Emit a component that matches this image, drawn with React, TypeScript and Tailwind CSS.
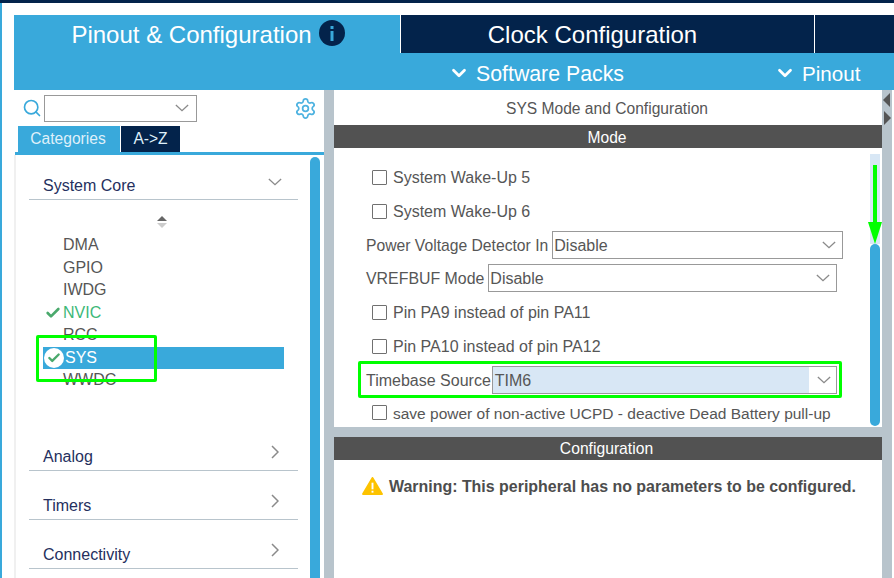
import { Check, ChevronDown, Search, Settings } from 'lucide-react'

const NAVY = 'bg-[#03234b]'

const categories = ['Analog', 'Timers', 'Connectivity']

const peripherals = ['DMA', 'GPIO', 'IWDG', 'NVIC', 'RCC', 'SYS', 'WWDC']

function Caret({ className = '' }: { className?: string }) {
  return (
    <svg viewBox="0 0 16 9" className={'w-[14px] h-[8px] ' + className} fill="none" stroke="#8a8a8a" strokeWidth="1.5">
      <path d="M1 1l7 6.5L15 1" />
    </svg>
  )
}

function CheckRow({ label, h = 'h-[34px]', size = '' }: { label: string; h?: string; size?: string }) {
  return (
    <div className={'flex items-center pl-[38px] ' + h}>
      <span className="w-[15px] h-[15px] border-[1.5px] border-[#707070] rounded-[1px] shrink-0" />
      <span className={'ml-[6px] pt-[2px] whitespace-nowrap ' + size}>{label}</span>
    </div>
  )
}

function SelectRow({ label, value, width, h, size = '' }: { label: string; value: string; width: string; h: string; size?: string }) {
  return (
    <div className={'flex items-center pl-[32px] ' + h}>
      <span className={'whitespace-nowrap mr-[4px] pt-[2px] ' + size}>{label}</span>
      <div className={'h-[28px] border border-[#999] flex items-center justify-between pl-[1px] pr-[6px] ' + width}>
        <span className="pt-[2px]">{value}</span>
        <Caret />
      </div>
    </div>
  )
}

function Category({ label, open }: { label: string; open?: boolean }) {
  return (
    <div className={'h-[49px] flex items-end justify-between border-b border-[#b8c4cc] pl-[14px] text-[#25305e] pb-[1px] ' + (open ? 'pr-[16px]' : 'pr-[19px]')}>
      <span>{label}</span>
      {open ? (
        <Caret className="mb-[12px]" />
      ) : (
        <svg viewBox="0 0 8 14" className="w-[8px] h-[14px] mb-[10px]" fill="none" stroke="#8a8a8a" strokeWidth="1.5">
          <path d="M1 1l6 6-6 6" />
        </svg>
      )}
    </div>
  )
}

export default function App() {
  return (
    <div className="relative w-[894px] h-[578px] bg-white overflow-hidden text-[16px] text-[#565656] font-['Liberation_Sans',Arial,sans-serif]">
      <div className={'h-[3px] ' + NAVY} />
      <div className="flex h-[575px]">
        <div className="w-[2px] bg-[#39a9db]" />
        <div className="w-[12px]" />
        <div className="w-[880px] pt-[12px]">
          {/* top tabs */}
          <div className="flex h-[38px] text-white text-[24px]">
            <div className="w-[386px] bg-[#39a9db] flex items-center justify-center pl-[2px] gap-[7px]">
              <span className="pt-[2px]">Pinout &amp; Configuration</span>
              <svg viewBox="0 0 26 26" className="w-[26px] h-[26px] -mt-[2px]">
                <circle cx="13" cy="13" r="13" fill="#03234b" />
                <rect x="11.5" y="11" width="3" height="10" fill="#39a9db" />
                <rect x="11.5" y="6" width="3" height="3" fill="#39a9db" />
              </svg>
            </div>
            <div className={'w-[414px] ml-[1px] flex items-center justify-center pr-[30px] border-r border-white ' + NAVY}>
              <span className="pt-[2px]">Clock Configuration</span>
            </div>
            <div className={'flex-1 ' + NAVY} />
          </div>
          {/* sub menu */}
          <div className="h-[37px] bg-[#39a9db] flex items-center text-white text-[21.3px] pl-[434px] pt-[7px]">
            <ChevronDown size={22} strokeWidth={3} className="-mt-[4px]" />
            <span className="ml-[6px] w-[300px]">Software Packs</span>
            <ChevronDown size={22} strokeWidth={3} className="-ml-[2px] -mt-[4px]" />
            <span className="ml-[6px] text-[20.6px] pb-[2px]">Pinout</span>
          </div>
          <div className="flex h-[488px]">
            {/* left panel */}
            <div className="w-[310px] flex flex-col">
              <div className="h-[36px] flex items-center pl-[8px] pr-[7px]">
                <Search size={20} strokeWidth={2} className="text-[#39a9db]" />
                <div className="ml-[2px] w-[153px] h-[27px] border border-[#999] flex items-center justify-end pr-[7px]">
                  <Caret />
                </div>
                <Settings size={23} strokeWidth={1.8} className="text-[#4db2e0] ml-auto" />
              </div>
              <div className="flex h-[26px] pl-[4px] text-[15.6px] text-[#dff0fa]">
                <div className="w-[102px] bg-[#39a9db] flex items-center justify-center pr-[2px]">Categories</div>
                <div className={'w-[59px] ml-[1px] flex items-center justify-center ' + NAVY}>A-&gt;Z</div>
              </div>
              <div className="h-[3px] ml-[1px] bg-[#39a9db]" />
              <div className="flex-1 flex border-l-2 border-[#f0f0f0] min-h-0">
                <div className="flex-1 pl-[13px] pr-[12px]">
                  <div className="-mt-[4px]">
                    <Category label="System Core" open />
                  </div>
                  <div className="h-[34px] pt-[10px] flex items-center justify-center pr-[3px]">
                    <svg viewBox="0 0 10 12" className="w-[10px] h-[12px]">
                      <path d="M5 0l5 5H0z" fill="#666" />
                      <path d="M5 12l5-5H0z" fill="#ccc" />
                    </svg>
                  </div>
                  <div className="pl-[14px] pr-[14px]">
                    {peripherals.map((p) => (
                      <div
                        key={p}
                        className={
                          'relative h-[22.5px] flex items-center pl-[20px] ' +
                          (p === 'SYS' ? 'bg-[#39a9db] text-white pl-[22px]' : p === 'NVIC' ? 'text-[#3cb878]' : '')
                        }
                      >
                        {p === 'NVIC' && <Check size={16} strokeWidth={4} className="absolute left-[2px] text-[#4aa96c]" />}
                        {p === 'SYS' && (
                          <span className="absolute left-[1px] w-[20px] h-[20px] rounded-full bg-white flex items-center justify-center">
                            <Check size={14} strokeWidth={4} className="text-[#4aa96c]" />
                          </span>
                        )}
                        {p}
                      </div>
                    ))}
                  </div>
                  <div className="h-[30px]" />
                  {categories.map((c) => (
                    <Category key={c} label={c} />
                  ))}
                </div>
                <div className="w-[10px] mt-[2px] rounded-t-[5px] bg-[#39a9db]" />
                <div className="w-[4px]" />
              </div>
            </div>
            <div className="w-[10px] bg-[#b8c4cc]" />
            {/* right panel */}
            <div className="w-[548px] flex flex-col">
              <div className="h-[35px] flex items-center justify-center pr-[2px] pt-[2px] text-[15.6px]">SYS Mode and Configuration</div>
              <div className="h-[23px] bg-[#525252] text-white flex items-center justify-center pt-[2px] pr-[2px] text-[15.6px]">Mode</div>
              <div className="h-[279px] flex overflow-hidden">
                <div className="flex-1 pt-[12px]">
                  <CheckRow label="System Wake-Up 5" />
                  <CheckRow label="System Wake-Up 6" />
                  <SelectRow label="Power Voltage Detector In" value="Disable" width="w-[291px]" h="h-[33px]" size="text-[15.7px]" />
                  <SelectRow label="VREFBUF Mode" value="Disable" width="w-[349px]" h="h-[34px]" size="text-[15.9px]" />
                  <CheckRow label="Pin PA9 instead of pin PA11" />
                  <CheckRow label="Pin PA10 instead of pin PA12" />
                  <div className="h-[34px] flex items-center pl-[32px]">
                    <span className="whitespace-nowrap mr-[1px] pt-[2px]">Timebase Source</span>
                    <div className="w-[345px] h-[28px] border border-[#999] flex items-center justify-between pr-[5px]">
                      <span className="w-[316px] h-full bg-[#d8e7f5] pl-[2px] pt-[2px] flex items-center">TIM6</span>
                      <Caret />
                    </div>
                  </div>
                  <CheckRow label="save power of non-active UCPD - deactive Dead Battery pull-up" h="h-[33px] -mt-[1px]" size="text-[15.5px]" />
                </div>
                <div className="w-[10px] mr-[2px] pt-[6px] flex flex-col">
                  <div className="h-[90px] bg-[#d8e7f5]" />
                  <div className="h-[182px] rounded-[5px] bg-[#39a9db]" />
                </div>
              </div>
              <div className="h-[10px] bg-[#b8c4cc]" />
              <div className="h-[23px] bg-[#525252] text-white flex items-center justify-center pr-[3px] text-[15.7px]">Configuration</div>
              <div className="flex items-center pl-[28px] pt-[15px] gap-[6px] font-bold text-[#4d4d4d]">
                <svg viewBox="0 0 22 19" className="w-[21px] h-[18px] -mt-[4px]">
                  <path d="M11 1L21 18H1z" fill="#fdc300" stroke="#fdc300" strokeWidth="2" strokeLinejoin="round" />
                  <rect x="10" y="6" width="2" height="7" fill="#fff" />
                  <rect x="10" y="14.5" width="2" height="2" fill="#fff" />
                </svg>
                <span className="whitespace-nowrap text-[15.95px] pb-[2px]">Warning: This peripheral has no parameters to be configured.</span>
              </div>
            </div>
            <div className="relative w-[10px] bg-[#b8c4cc]">
              <svg viewBox="0 0 10 34" className="absolute left-0 top-[3px] w-[10px] h-[34px]">
                <path d="M8 0v14L1 7z" fill="#555" />
                <path d="M2 18v14l7-7z" fill="#555" />
              </svg>
            </div>
          </div>
        </div>
      </div>
      {/* green annotations drawn over the screenshot */}
      <div className="absolute left-[36px] top-[335px] w-[121px] h-[47px] border-[3px] border-[#00ff00] rounded-[2px]" />
      <div className="absolute left-[358px] top-[361px] w-[484px] h-[37px] border-[3px] border-[#00ff00] rounded-[2px]" />
      <svg viewBox="0 0 14 80" className="absolute left-[868px] top-[165px] w-[14px] h-[80px]">
        <path d="M7 0v60" stroke="#00ff00" strokeWidth="4" />
        <path d="M0 57h14L7 79z" fill="#00ff00" />
      </svg>
    </div>
  )
}
